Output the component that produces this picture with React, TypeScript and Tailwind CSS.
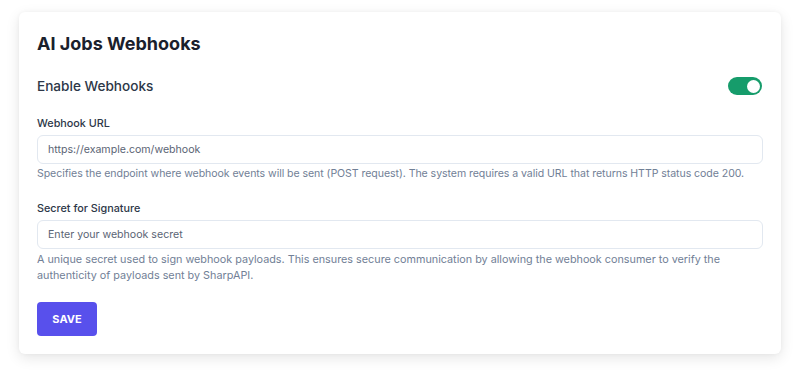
import React, { useState } from 'react';

const App: React.FC = () => {
    const [enabled, setEnabled] = useState(true);

    return (
        <div className="min-h-[373px] bg-white px-[19px] pt-[12px] font-['Inter',sans-serif]">
            <div className="rounded-md bg-white px-[18px] pt-[20px] pb-[18px] shadow-[0_4px_14px_rgba(0,0,0,0.1),0_0_4px_rgba(0,0,0,0.04)]">
                {/* Titre */}
                <h2 className="text-[18px] leading-[24px] font-bold text-[#1a202c]">AI Jobs Webhooks</h2>

                {/* Activer */}
                <div className="mt-[20px] flex h-[20px] items-center justify-between">
                    <span className="text-[13.6px] leading-[20px] font-medium text-[#2d3748]">Enable Webhooks</span>
                    <button
                        onClick={() => setEnabled(!enabled)}
                        className={`mr-[1px] flex h-[18px] w-[34px] items-center rounded-full px-[2px] ${enabled ? 'justify-end bg-[#169c6b]' : 'justify-start bg-gray-300'}`}
                    >
                        <span className="size-[13px] rounded-full bg-white" />
                    </button>
                </div>

                {/* URL */}
                <label className="mt-[20px] block text-[10.8px] leading-[16px] font-medium text-[#2d3748]">Webhook URL</label>
                <input
                    className="mt-[3px] block h-[29px] w-full rounded-md border border-[#e2e8f0] px-[10px] text-[10.6px] text-[#5a6474] placeholder:text-[#5a6474] outline-none"
                    placeholder="https://example.com/webhook"
                />
                <p className="mt-[2px] text-[10.55px] leading-[16px] tracking-[-0.05px] text-[#718096]">
                    Specifies the endpoint where webhook events will be sent (POST request). The system requires a valid URL that returns HTTP status code 200.
                </p>

                {/* Secret */}
                <label className="mt-[19px] block text-[10.8px] leading-[16px] font-medium text-[#2d3748]">Secret for Signature</label>
                <input
                    className="mt-[3px] block h-[29px] w-full rounded-md border border-[#e2e8f0] px-[10px] text-[10.6px] text-[#5a6474] placeholder:text-[#5a6474] outline-none"
                    placeholder="Enter your webhook secret"
                />
                <p className="mt-[3px] text-[10.8px] leading-[16px] text-[#718096]">
                    A unique secret used to sign webhook payloads. This ensures secure communication by allowing the webhook consumer to verify the authenticity of payloads sent by SharpAPI.
                </p>

                <button className="mt-[18px] block h-[34px] w-[60px] rounded-[4px] bg-[#5850ec] text-[11px] font-bold text-white">
                    SAVE
                </button>
            </div>
        </div>
    );
};

export default App;
